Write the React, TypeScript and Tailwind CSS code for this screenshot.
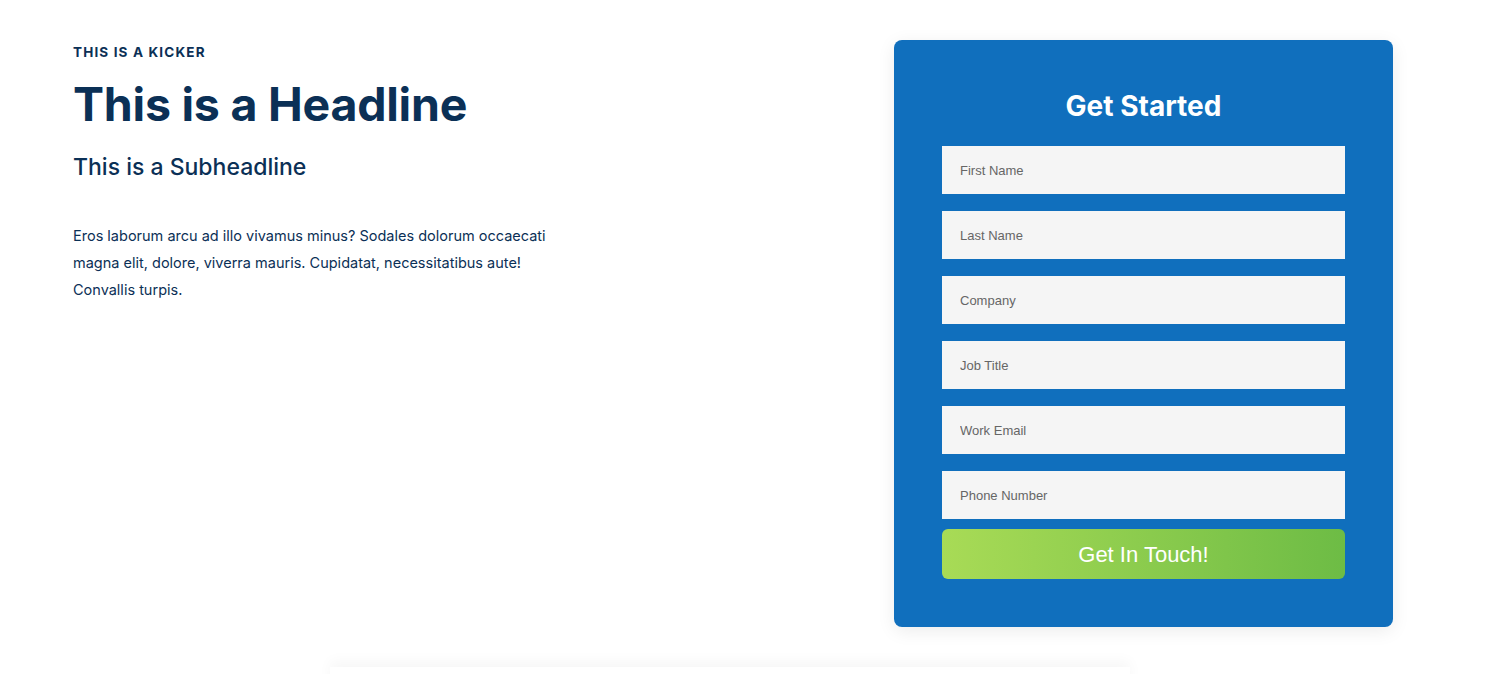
const FIELDS = ["First Name", "Last Name", "Company", "Job Title", "Work Email", "Phone Number"];

export default function App() {
  return (
    <div className="min-h-screen bg-white font-['Inter',sans-serif] overflow-hidden">
      <section className="flex justify-between pl-[73px] pr-[110px] pt-[40px]">
        {/* left copy */}
        <div className="pt-[4px] text-[#0b3056]">
          <div className="text-[13.5px] font-bold tracking-[0.085em] leading-[16px]">THIS IS A KICKER</div>
          <h1 className="mt-[16px] text-[46.5px] font-bold leading-[56px] tracking-[-0.005em]">This is a Headline</h1>
          <h2 className="mt-[19px] text-[23px] font-medium leading-[32px]">This is a Subheadline</h2>
          <p className="mt-[39px] w-[480px] text-[14.5px] leading-[27px]">
            Eros laborum arcu ad illo vivamus minus? Sodales dolorum occaecati magna elit, dolore, viverra mauris. Cupidatat, necessitatibus aute! Convallis turpis.
          </p>
        </div>

        {/* form card */}
        <div className="w-[499px] rounded-[8px] bg-[#106fbd] px-[48px] pt-[48px] pb-[48px] shadow-[0_4px_18px_rgba(0,0,0,0.08)]">
          <h3 className="text-center text-[28px] font-bold leading-[36px] text-white">Get Started</h3>
          <div className="mt-[22px] flex flex-col gap-[17px]">
            {FIELDS.map((f) => (
              <input
                key={f}
                placeholder={f}
                className="h-[48px] w-full bg-[#f5f5f5] px-[18px] font-['Liberation_Sans',Arial,sans-serif] text-[13px] text-[#333] placeholder:text-[#666] outline-none"
              />
            ))}
          </div>
          <button className="mt-[10px] h-[50px] w-full rounded-[6px] bg-gradient-to-r from-[#a8db56] to-[#6dbc45] font-['Liberation_Sans',Arial,sans-serif] text-[22px] text-white">
            Get In Touch!
          </button>
        </div>
      </section>

      {/* next section peeking in */}
      <div className="ml-[330px] mt-[40px] h-[40px] w-[800px] bg-white shadow-[0_-6px_14px_rgba(0,0,0,0.035)]" />
    </div>
  );
}
